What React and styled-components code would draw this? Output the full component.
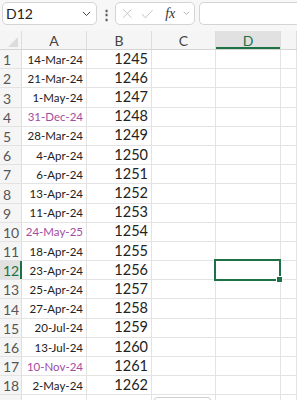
import React from "react";
import styled, { createGlobalStyle } from "styled-components";

const Global = createGlobalStyle`
  html, body { margin: 0; padding: 0; background: #ffffff; overflow: hidden; }
  body { font-family: Lato, "Open Sans", sans-serif; }
`;

const Page = styled.div`
  width: 297px;
  height: 400px;
  overflow: hidden;
  position: relative;
  background: #fff;
`;

const Toolbar = styled.div`
  display: flex;
  align-items: center;
  height: 31px;
  padding: 2px 0 0 2px;
  box-sizing: border-box;
  background: #f7f7f7;
  align-items: flex-start;
`;

const Box = styled.div`
  height: 23px;
  box-sizing: border-box;
  border: 1px solid #d4d4d4;
  border-radius: 5px;
  background: #fff;
  display: flex;
  align-items: center;
`;

const NameBox = styled(Box)`
  width: 95px;
  padding: 0 5px 0 3px;
  justify-content: space-between;
  font-size: 14px;
  color: #222;
`;

const Dots = styled.div`
  width: 18px;
  height: 23px;
  display: flex;
  align-items: center;
  justify-content: center;
  color: #555;
  font-size: 13px;
  font-weight: bold;
`;

const FxBox = styled(Box)`
  width: 80px;
  padding: 0 4px 0 6px;
  gap: 8px;
  color: #c4c4c4;
`;

const Fx = styled.span`
  font-family: "Liberation Serif", serif;
  font-style: italic;
  font-size: 14px;
  color: #333;
  margin-left: 4px;
`;

const FormulaInput = styled(Box)`
  flex: 1;
  margin-left: 4px;
  border-right: none;
  border-radius: 5px 0 0 5px;
`;

const cols = "22px 65px 65px 64px 65px 1fr";

const HeaderRow = styled.div`
  display: grid;
  grid-template-columns: ${cols};
  height: 18px;
  background: #f5f5f5;
  border-bottom: 1px solid #d4d4d4;
`;

const HeadCell = styled.div`
  border-right: 1px solid #dedede;
  display: flex;
  align-items: center;
  justify-content: center;
  font-size: 14px;
  color: ${p => (p.$sel ? "#1e7145" : "#444")};
  background: ${p => (p.$sel ? "#e1e1e1" : "transparent")};
  box-shadow: ${p => (p.$sel ? "inset 0 -2px 0 #1e7145" : "none")};
  position: relative;
  line-height: 1;
  padding-top: 1px;
  box-sizing: border-box;
`;

const Corner = styled(HeadCell)`
  overflow: hidden;
`;

const Row = styled.div`
  display: grid;
  grid-template-columns: ${cols};
  height: 19.2px;
  box-sizing: border-box;
  border-bottom: 1px solid #e3e3e3;
`;

const RowNum = styled.div`
  background: ${p => (p.$sel ? "#e1e1e1" : "#f5f5f5")};
  border-right: ${p => (p.$sel ? "2px solid #1e7145" : "1px solid #dedede")};
  color: ${p => (p.$sel ? "#1e7145" : "#555")};
  font-size: 14px;
  display: flex;
  align-items: flex-end;
  padding: 0 0 1px 3px;
  box-sizing: border-box;
  line-height: 1;
`;

const Cell = styled.div`
  border-right: 1px solid #e3e3e3;
  display: flex;
  align-items: flex-end;
  justify-content: flex-end;
  padding: 0 3px 2px 0;
  box-sizing: border-box;
  line-height: 1;
  position: relative;
  font-size: ${p => (p.$num ? "14.5px" : "11.5px")};
  color: ${p => (p.$purple ? "#a24d9f" : "#222")};
  padding-bottom: ${p => (p.$num ? "2px" : "3px")};
`;

const Selection = styled.div`
  position: absolute;
  left: -2px;
  top: -2px;
  right: -1px;
  bottom: -2px;
  border: 2px solid #1e7145;
  z-index: 2;
  pointer-events: none;
`;

const Handle = styled.div`
  position: absolute;
  right: -4px;
  bottom: -4px;
  width: 5px;
  height: 5px;
  background: #1e7145;
  border: 1px solid #fff;
`;

const Popup = styled.div`
  position: absolute;
  left: 154px;
  top: 397px;
  width: 55px;
  height: 20px;
  border: 1px solid #cfcfcf;
  border-radius: 3px;
  background: #fff;
`;

const data = [
  ["14-Mar-24", 1245],
  ["21-Mar-24", 1246],
  ["1-May-24", 1247],
  ["31-Dec-24", 1248, true],
  ["28-Mar-24", 1249],
  ["4-Apr-24", 1250],
  ["6-Apr-24", 1251],
  ["13-Apr-24", 1252],
  ["11-Apr-24", 1253],
  ["24-May-25", 1254, true],
  ["18-Apr-24", 1255],
  ["23-Apr-24", 1256],
  ["25-Apr-24", 1257],
  ["27-Apr-24", 1258],
  ["20-Jul-24", 1259],
  ["13-Jul-24", 1260],
  ["10-Nov-24", 1261, true],
  ["2-May-24", 1262],
  ["", ""],
];

const Chevron = ({ size = 10, color = "#555" }) => (
  <svg width={size} height={size * 0.6} viewBox="0 0 10 6">
    <path d="M1 1 L5 5 L9 1" fill="none" stroke={color} strokeWidth="1.1" />
  </svg>
);

export default function App() {
  return (
    <Page>
      <Global />
      <Toolbar>
        <NameBox>
          <span>D12</span>
          <Chevron size={9} color="#444" />
        </NameBox>
        <Dots>⋮</Dots>
        <FxBox>
          <svg width="11" height="11" viewBox="0 0 11 11">
            <path d="M1 1 L10 10 M10 1 L1 10" stroke="#c4c4c4" strokeWidth="1" fill="none" />
          </svg>
          <svg width="13" height="10" viewBox="0 0 13 10">
            <path d="M1 5 L4.5 9 L12 1" stroke="#c4c4c4" strokeWidth="1" fill="none" />
          </svg>
          <Fx>fx</Fx>
          <Chevron size={7} color="#999" />
        </FxBox>
        <FormulaInput />
      </Toolbar>
      <HeaderRow>
        <Corner>
          <svg width="10" height="10" viewBox="0 0 10 10" style={{ position: "absolute", right: 3, bottom: 2 }}>
            <path d="M10 0 L10 10 L0 10 Z" fill="#dcdcdc" />
          </svg>
        </Corner>
        <HeadCell>A</HeadCell>
        <HeadCell>B</HeadCell>
        <HeadCell>C</HeadCell>
        <HeadCell $sel>D</HeadCell>
        <HeadCell />
      </HeaderRow>
      {data.map(([d, n, purple], i) => {
        const sel = i === 11;
        return (
          <Row key={i}>
            <RowNum $sel={sel}>{i + 1}</RowNum>
            <Cell $purple={purple}>{d}</Cell>
            <Cell $num>{n}</Cell>
            <Cell />
            <Cell>
              {sel && (
                <Selection>
                  <Handle />
                </Selection>
              )}
            </Cell>
            <Cell />
          </Row>
        );
      })}
      <Popup />
    </Page>
  );
}
